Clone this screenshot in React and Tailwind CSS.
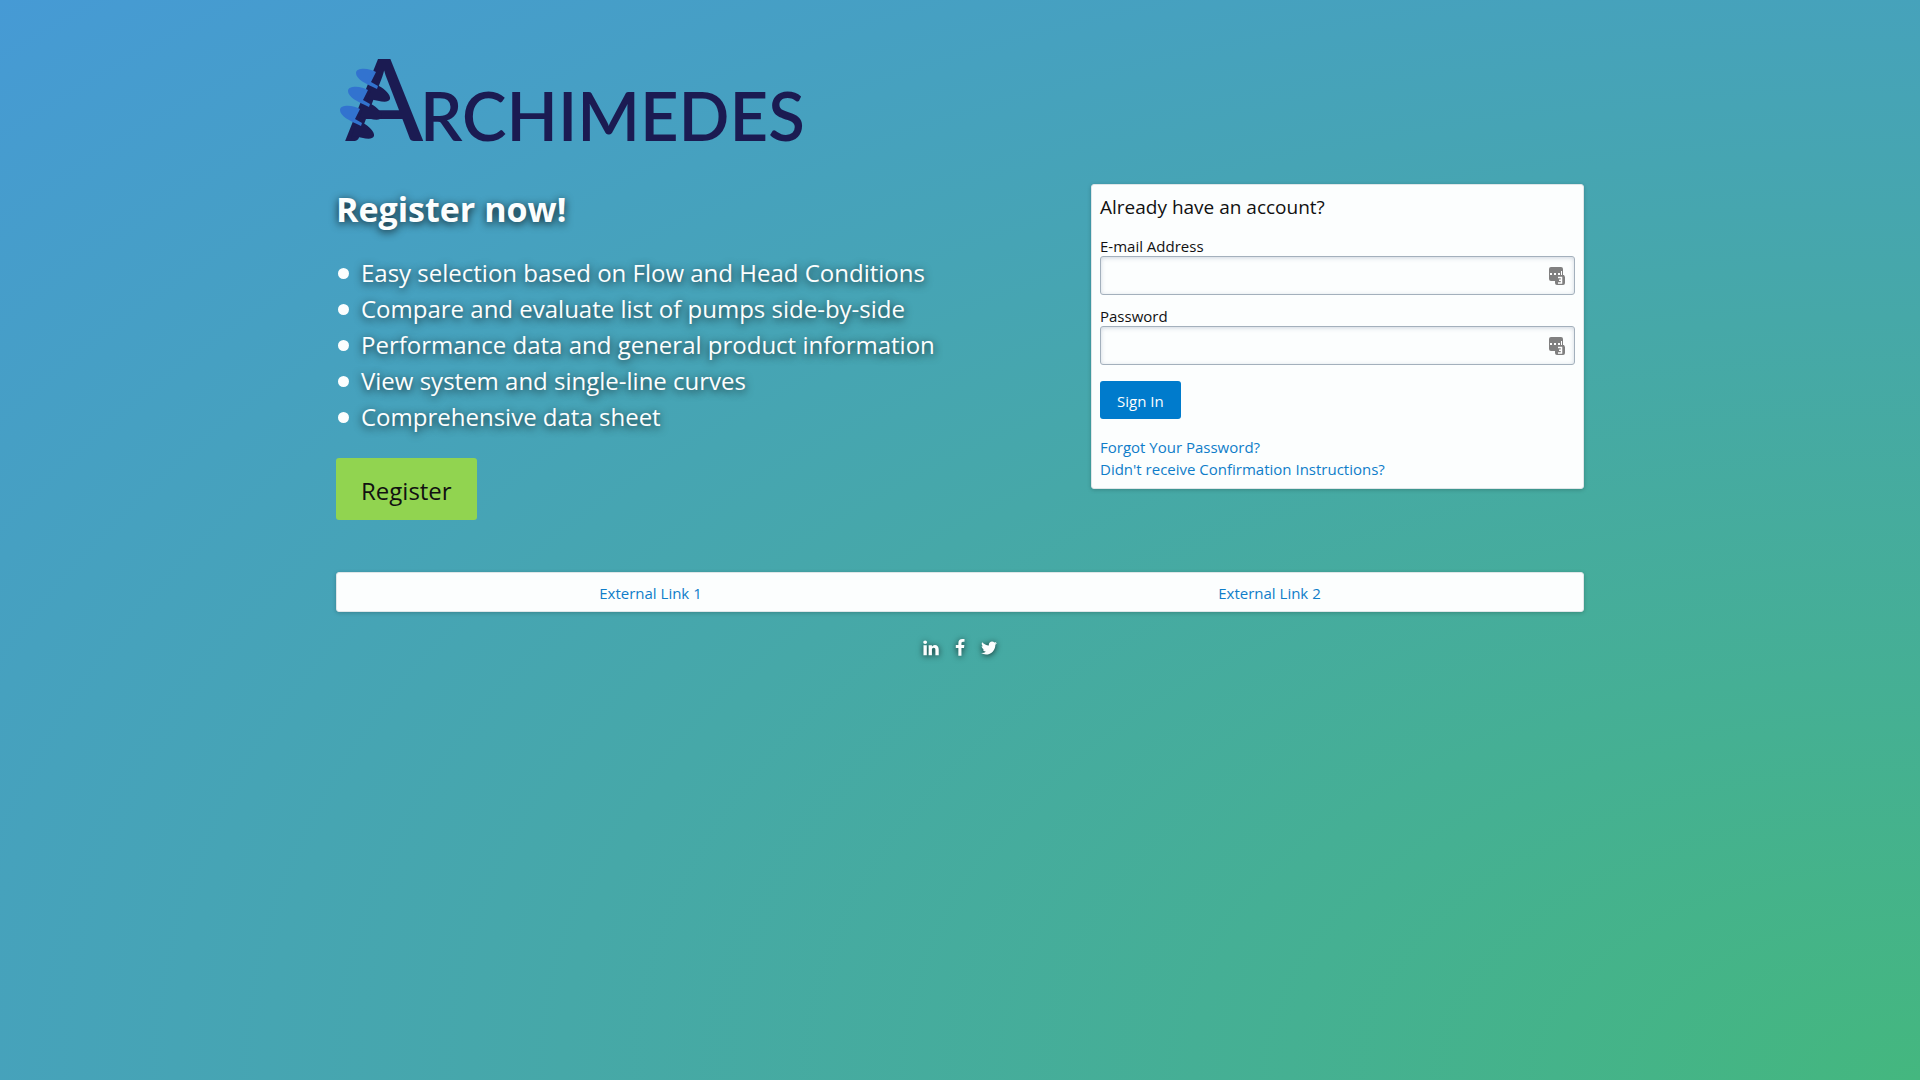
const features = [
  "Easy selection based on Flow and Head Conditions",
  "Compare and evaluate list of pumps side-by-side",
  "Performance data and general product information",
  "View system and single-line curves",
  "Comprehensive data sheet",
];

const social = [
  {
    name: "LinkedIn",
    d: "M477 625v991h-330v-991h330zm21-306q1 73-50.500 122t-135.500 49h-2q-82 0-132-49t-50-122q0-74 51.500-122.500t134.500-48.500 133 48.500 51 122.500zm1166 729v568h-329v-530q0-105-40.500-164.500t-126.500-59.500q-63 0-105.500 34.500t-63.500 85.500q-11 30-11 81v553h-329q2-399 2-647t-1-296l-1-48h329v144h-2q20-32 41-56t56.500-52 87-43.500 114.500-15.500q171 0 275 113.500t104 332.500z",
  },
  {
    name: "Facebook",
    d: "M1343 12v264h-157q-86 0-116 36t-30 108v189h293l-39 296h-254v759h-306v-759h-255v-296h255v-218q0-186 104-288.500t277-102.500q147 0 228 12z",
  },
  {
    name: "Twitter",
    d: "M1684 408q-67 98-162 167 1 14 1 42 0 130-38 259.500t-115.500 248.500-184.500 210.500-258 146-323 54.500q-271 0-496-145 35 4 78 4 225 0 401-138-105-2-188-64.500t-114-159.500q33 5 61 5 43 0 85-11-112-23-185.500-111.500t-73.500-205.500v-4q68 38 146 41-66-44-105-115t-39-154q0-88 44-163 121 149 294.500 238.500t371.500 99.500q-8-38-8-74 0-134 94.500-228.500t228.500-94.500q140 0 236 102 109-21 205-78-37 115-142 178 93-10 186-50z",
  },
];

function Blade({ x, y }) {
  return (
    <g transform={`translate(${x} ${y})`}>
      <path d="M43 40C49 43 55 49 54 53C52 58 43 55 34 53L31 56L36 40Z" />
      <path d="M40 26C34 22 20 21 20 27C20 33 30 38 41 43L42 40L35 36Z" fill="#3273cf" />
    </g>
  );
}

function Logo() {
  return (
    <svg role="img" aria-label="Archimedes" viewBox="0 0 480 104" className="block w-[480px] max-w-full overflow-visible" fill="#1b1b52">
      <text x="9" y="95" fontFamily="Lato" fontWeight="500" fontSize="115">A</text>
      <Blade x={0} y={0} />
      <Blade x={-8} y={18} />
      <Blade x={-16} y={37} />
      <text x="84" y="95" fontFamily="Lato" fontWeight="600" fontSize="67">RCHIMEDES</text>
    </svg>
  );
}

function VaultIcon() {
  return (
    <svg aria-hidden="true" viewBox="0 0 16 18" className="absolute top-1/2 right-[10px] h-[18px] w-4 -translate-y-1/2">
      <path d="M2 0h10a2 2 0 0 1 2 2v6h1l1 2v6a2 2 0 0 1-2 2H8a2 2 0 0 1-2-2v-2H2a2 2 0 0 1-2-2V2a2 2 0 0 1 2-2z" fill="#808080" />
      <path d="M1 6h2v2H1zM5 6h2v2H5zM9 6h2v2H9zM12 4h1v4h-1z" fill="#fff" />
      <path d="M9 10.500h3.500v5.500H9M10 13.200h2.500" fill="none" stroke="#fff" strokeWidth="1.500" />
    </svg>
  );
}

function Field({ id, label, type }) {
  return (
    <div>
      <label htmlFor={id} className="block leading-5">{label}</label>
      <div className="relative">
        <input id={id} type={type} className="block h-[39px] w-full rounded-[3px] border border-[#a3b0bc] bg-[#fcfefe] px-2 pr-8 shadow-[inset_0_1px_4px_rgba(100,120,150,0.3)]" />
        <VaultIcon />
      </div>
    </div>
  );
}

const card = "rounded-[3px] border border-[#dfe6e8] bg-[#fcfefe] shadow-[0_1px_4px_rgba(0,0,0,0.2)]";

export default function App() {
  return (
    <div className="min-h-screen bg-[radial-gradient(ellipse_farthest-corner_at_100%_100%,#44b77f_0%,#46a8a8_50%,#46a1bf_75%,#469ad5_100%)] font-['Open_Sans',sans-serif] text-[15px] text-[#111]">
      <div className="mx-auto w-full max-w-[1248px] pt-[46px]">
        <Logo />
        <main className="mt-[34px] flex items-start justify-between gap-8">
          <section className="text-[#fcfefe] [text-shadow:0_2px_8px_rgba(0,0,0,0.8)]">
            <h1 className="mt-1 text-[34px] leading-[42px] font-bold">Register now!</h1>
            <ul className="mt-[25px] text-2xl leading-9">
              {features.map((f) => (
                <li key={f} className="flex items-center">
                  <span className="mr-3 ml-[2px] size-[11px] rounded-full bg-[#fcfefe]" />
                  {f}
                </li>
              ))}
            </ul>
            <button className="mt-[23px] h-[62px] rounded-[3px] bg-[#91d450] px-[25px] pt-1 text-2xl text-[#111]">Register</button>
          </section>
          <form className={`w-[493px] p-2 ${card}`}>
            <h2 className="text-[19px] leading-7">Already have an account?</h2>
            <div className="mt-[15px] flex flex-col gap-[11px]">
              <Field id="email" label="E-mail Address" type="email" />
              <Field id="password" label="Password" type="password" />
            </div>
            <button type="button" className="mt-4 h-[38px] rounded-[3px] bg-[#007bcc] px-[17px] pt-[2px] text-[#fcfefe]">Sign In</button>
            <div className="mt-[17px] flex flex-col items-start leading-[22px] text-[#0f7dc9]">
              <a href="#forgot">Forgot Your Password?</a>
              <a href="#confirm">Didn't receive Confirmation Instructions?</a>
            </div>
          </form>
        </main>
        <nav className={`mt-[52px] grid h-[40px] grid-cols-2 items-center px-1 pt-[2px] text-center text-[#0f7dc9] ${card}`}>
          <div><a href="#link1">External Link 1</a></div>
          <div><a href="#link2">External Link 2</a></div>
        </nav>
        <footer className="mt-[27px] flex justify-center gap-[11px] text-[#fcfefe]">
          {social.map((s) => (
            <a key={s.name} href={`#${s.name}`} aria-label={s.name}>
              <svg viewBox="0 0 1792 1792" fill="currentColor" className="size-[18px] overflow-visible drop-shadow-[0_1px_3px_rgba(0,0,0,0.7)]">
                <path d={s.d} />
              </svg>
            </a>
          ))}
        </footer>
      </div>
    </div>
  );
}
